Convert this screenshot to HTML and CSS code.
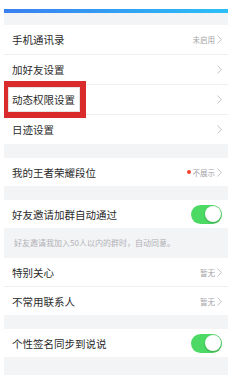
FILE: index.html
```html
<!DOCTYPE html>
<html lang="zh-CN">

<head>
  <meta charset="UTF-8">
  <meta name="viewport" content="width=device-width, initial-scale=1.0">
  <title>设置</title>
  <link rel="stylesheet" href="styles.css">
</head>

<body>
  <div class="screen">
    <div class="top-bar"></div>

    <div class="group first">
      <div class="row">
        <span class="label">手机通讯录</span>
        <span class="value">未启用<svg class="chev" viewBox="0 0 5 9"><path d="M0.5 0.5 L4.3 4.5 L0.5 8.5" /></svg></span>
      </div>
      <div class="row">
        <span class="label">加好友设置</span>
        <span class="value"><svg class="chev" viewBox="0 0 5 9"><path d="M0.5 0.5 L4.3 4.5 L0.5 8.5" /></svg></span>
      </div>
      <div class="row highlighted">
        <span class="label">动态权限设置</span>
        <span class="value"><svg class="chev" viewBox="0 0 5 9"><path d="M0.5 0.5 L4.3 4.5 L0.5 8.5" /></svg></span>
        <div class="mark"></div>
      </div>
      <div class="row">
        <span class="label">日迹设置</span>
        <span class="value"><svg class="chev" viewBox="0 0 5 9"><path d="M0.5 0.5 L4.3 4.5 L0.5 8.5" /></svg></span>
      </div>
    </div>

    <div class="group">
      <div class="row">
        <span class="label">我的王者荣耀段位</span>
        <span class="value"><i class="dot"></i>不展示<svg class="chev" viewBox="0 0 5 9"><path d="M0.5 0.5 L4.3 4.5 L0.5 8.5" /></svg></span>
      </div>
    </div>

    <div class="group">
      <div class="row">
        <span class="label">好友邀请加群自动通过</span>
        <span class="switch on"><i></i></span>
      </div>
    </div>
    <div class="note">好友邀请我加入50人以内的群时，自动同意。</div>
    <div class="group flush">
      <div class="row">
        <span class="label">特别关心</span>
        <span class="value">暂无<svg class="chev" viewBox="0 0 5 9"><path d="M0.5 0.5 L4.3 4.5 L0.5 8.5" /></svg></span>
      </div>
      <div class="row">
        <span class="label">不常用联系人</span>
        <span class="value">暂无<svg class="chev" viewBox="0 0 5 9"><path d="M0.5 0.5 L4.3 4.5 L0.5 8.5" /></svg></span>
      </div>
    </div>

    <div class="group">
      <div class="row">
        <span class="label">个性签名同步到说说</span>
        <span class="switch on"><i></i></span>
      </div>
    </div>
  </div>
</body>

</html>
```

FILE: styles.css
```css
body {
  margin: 0;
  padding-top: 9px;
  background-color: #fff;
  font-family: "Noto Sans CJK SC", "Noto Sans", sans-serif;
}

.screen {
  width: 224px;
  height: 366px;
  margin-left: 4px;
  background-color: #f3f4f6;
  overflow: hidden;
}

.top-bar {
  height: 4px;
  background: linear-gradient(to right, #3a7ff0, #2bc0f6);
}

.group {
  margin-top: 14px;
  background-color: #fff;
}

.group.first {
  margin-top: 12px;
}

.group.flush {
  margin-top: 0;
}

.row {
  position: relative;
  display: flex;
  align-items: center;
  justify-content: space-between;
  height: 28px;
  padding: 0 6px 0 8px;
  border-bottom: 1px solid #eeeff1;
}

.group .row:last-child {
  border-bottom: none;
}

.group.first .row {
  height: 29px;
}

.label {
  font-size: 10.5px;
  color: #2b2b2b;
}

.value {
  display: flex;
  align-items: center;
  font-size: 7.5px;
  color: #a4a4a8;
}

.chev {
  width: 5px;
  height: 9px;
  margin-left: 2px;
  fill: none;
  stroke: #bdbdc2;
  stroke-width: 0.9;
}

.dot {
  width: 4px;
  height: 4px;
  margin-right: 2px;
  border-radius: 50%;
  background-color: #f0442c;
}

.mark {
  position: absolute;
  left: -2px;
  top: -4px;
  width: 72px;
  height: 25px;
  border: 6px solid #d92a2c;
  box-shadow: inset 0 0 0 1px #e4e4e4;
}

.switch {
  position: relative;
  width: 31px;
  height: 19px;
  border-radius: 10px;
  background-color: #4cd964;
}

.switch i {
  position: absolute;
  right: 1.5px;
  top: 1.5px;
  width: 16px;
  height: 16px;
  border-radius: 50%;
  background-color: #fff;
  box-shadow: 0 1px 2px rgba(0, 0, 0, 0.25);
}

.note {
  height: 30px;
  padding-left: 10px;
  line-height: 30px;
  font-size: 8px;
  color: #b2b2b6;
}
```
